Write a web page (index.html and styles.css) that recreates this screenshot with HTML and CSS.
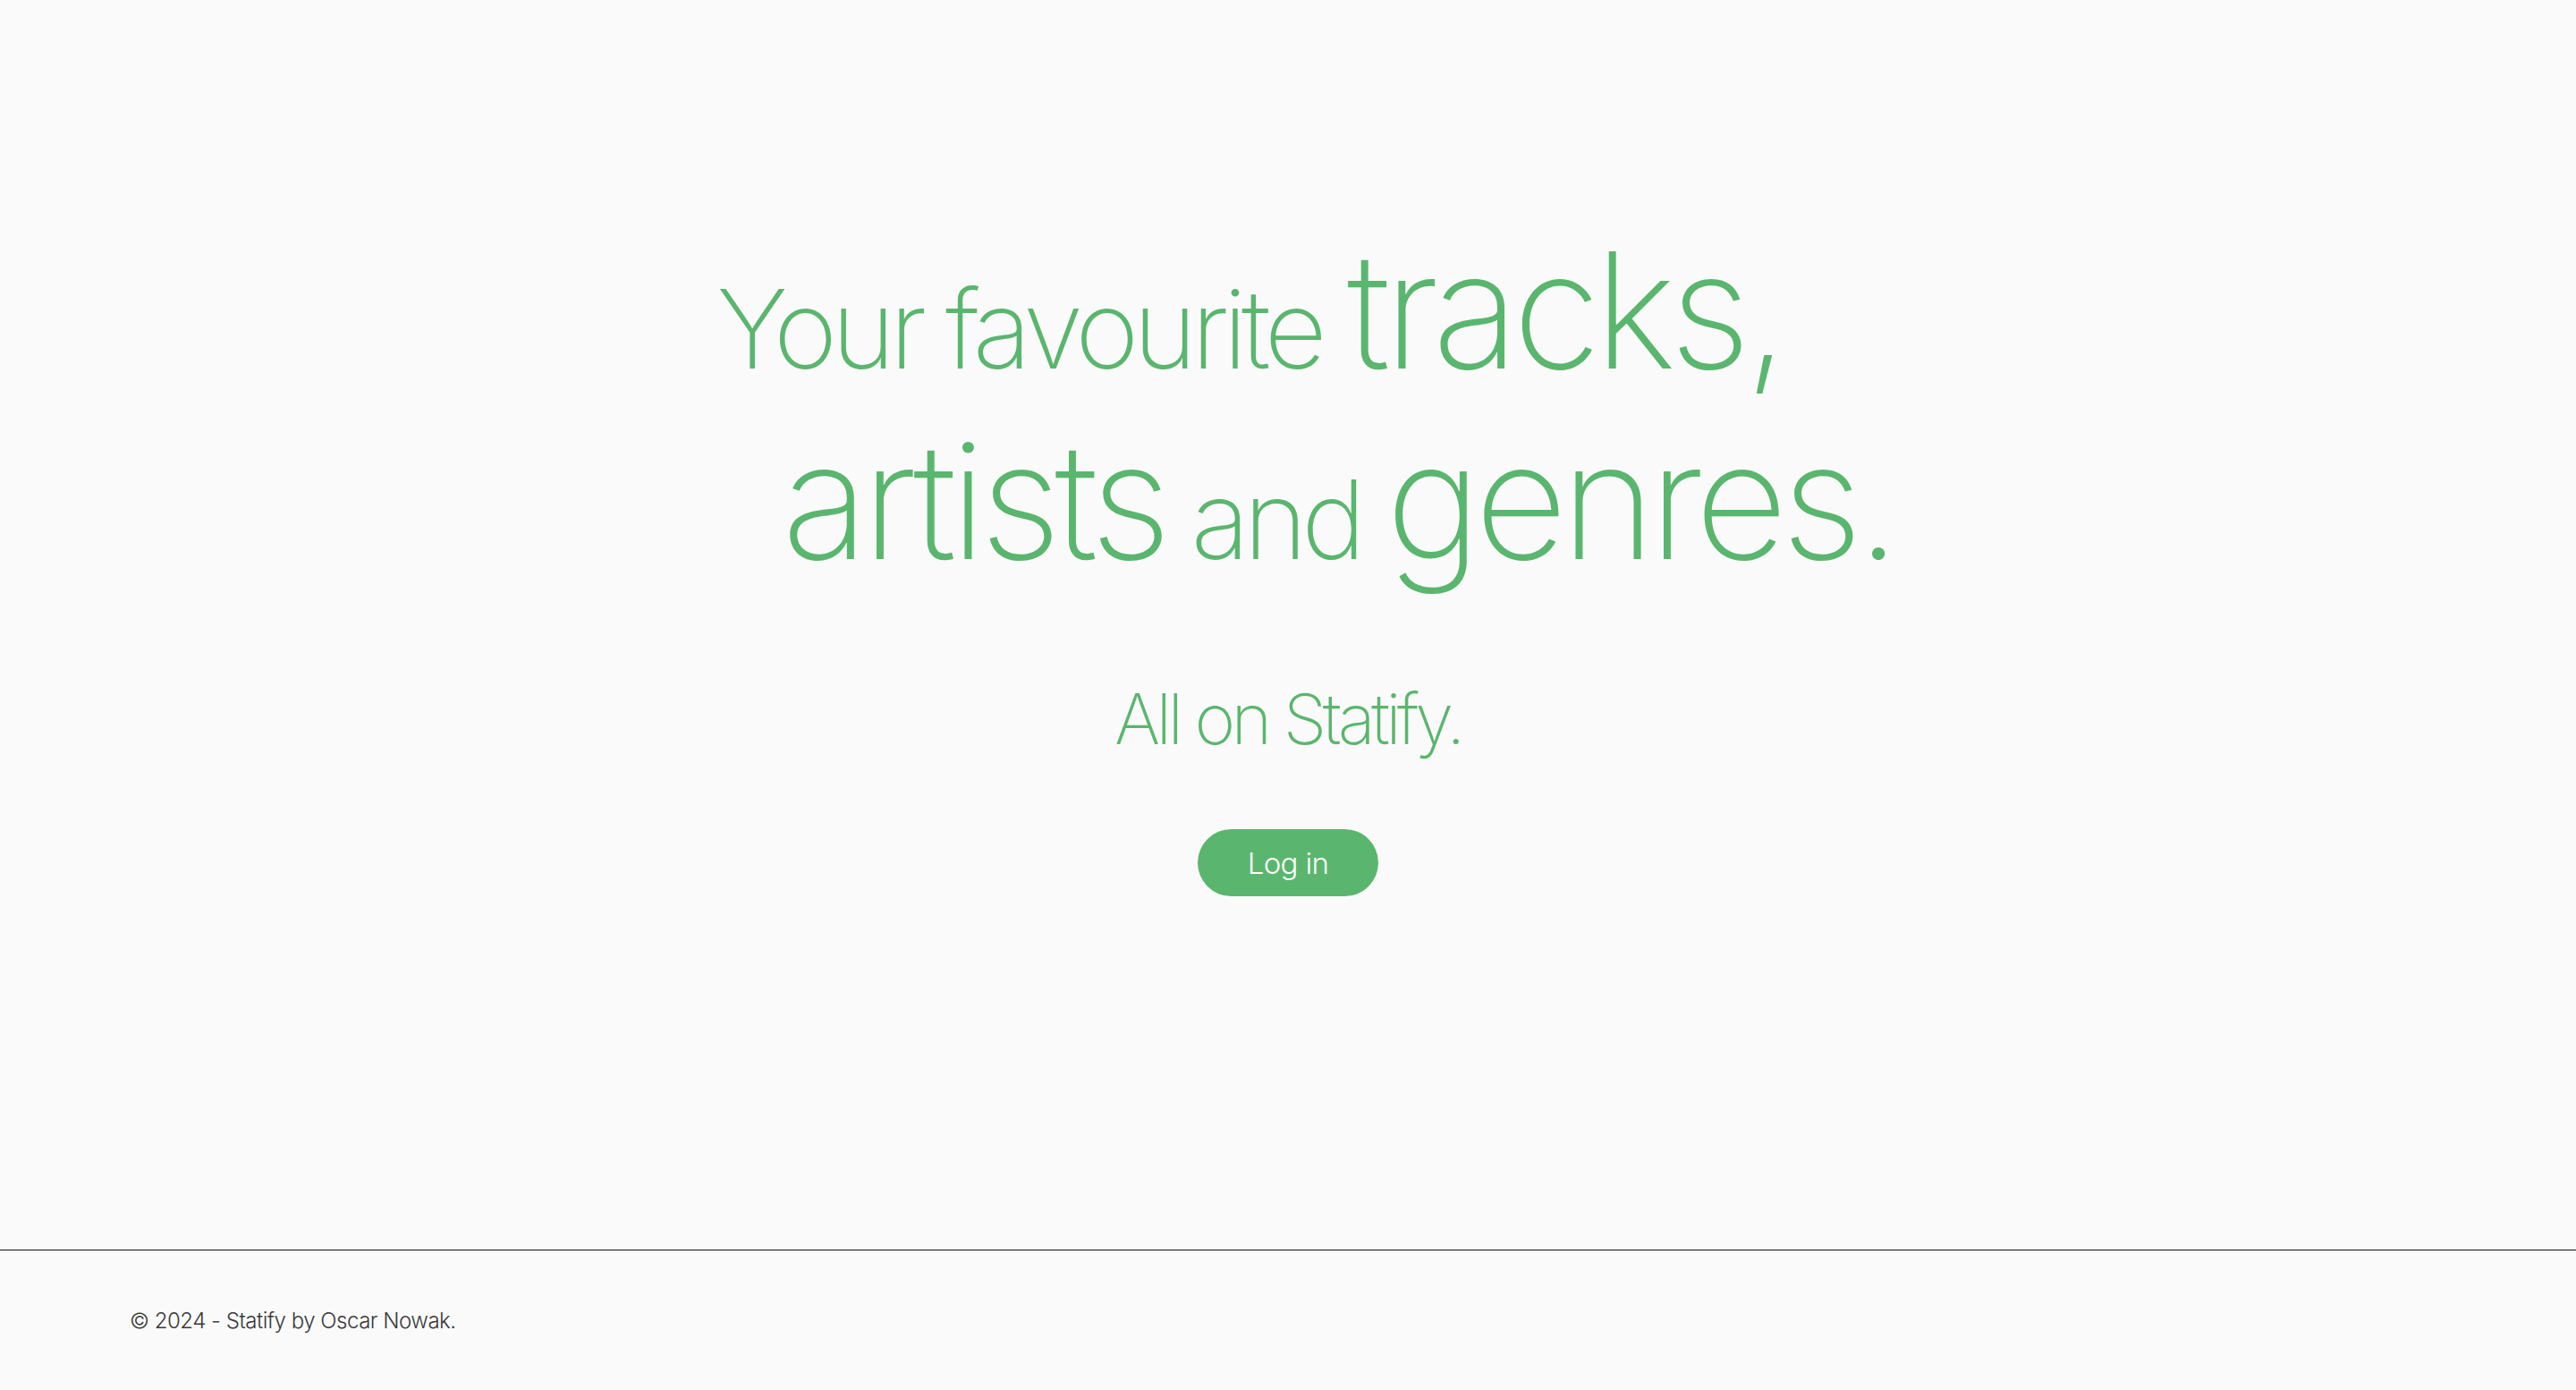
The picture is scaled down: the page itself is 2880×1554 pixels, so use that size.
FILE: index.html
```html
<!DOCTYPE html>
<html lang="en">
<head>
<meta charset="utf-8">
<title>Statify</title>
<link rel="stylesheet" href="styles.css">
</head>
<body>
<main class="hero">
  <h1 class="headline">
    <span class="line line-one"><span class="small">Your favourite</span> <span class="big">tracks,</span></span>
    <span class="line line-two"><span class="big">artists</span> <span class="small">and</span> <span class="big">genres.</span></span>
  </h1>
  <p class="tagline">All on Statify.</p>
  <a class="login" href="#">Log in</a>
</main>
<footer class="footer">
  <p class="copy">© 2024 - Statify by Oscar Nowak.</p>
</footer>
</body>
</html>
```
FILE: styles.css
```css
html, body {
  margin: 0;
  padding: 0;
}
body {
  background: #fafafa;
  font-family: "Inter", "Noto Sans", sans-serif;
  color: #5ab66e;
  height: 1554px;
  display: flex;
  flex-direction: column;
}
.hero {
  height: 1397px;
  box-sizing: border-box;
  padding-top: 240px;
  display: flex;
  flex-direction: column;
  align-items: center;
}
.headline {
  margin: 0;
  width: 100%;
  font-weight: 150;
  font-size: 180px;
  line-height: 213px;
  letter-spacing: -0.04em;
  word-spacing: -0.08em;
  text-align: center;
}
.line {
  display: block;
  white-space: nowrap;
}
.line-one {
  padding-right: 86px;
}
.line-two {
  padding-left: 112px;
}
.small {
  font-size: 122px;
  line-height: 1;
  letter-spacing: -0.055em;
  word-spacing: normal;
}
.big {
  line-height: 1;
}
.tagline {
  margin: 90px 0 0;
  font-size: 78px;
  line-height: 96px;
  font-weight: 150;
  letter-spacing: -0.06em;
}
.login {
  margin-top: 75px;
  height: 75px;
  padding: 0 56px;
  border-radius: 38px;
  background: #5ab66e;
  color: #ffffff;
  text-decoration: none;
  font-size: 33px;
  font-weight: 300;
  letter-spacing: -0.02em;
  display: flex;
  align-items: center;
  justify-content: center;
}
.footer {
  border-top: 1px solid #111111;
  flex: 1;
  padding-left: 145px;
}
.copy {
  margin: 0;
  padding-top: 64px;
  font-size: 24px;
  line-height: 30px;
  font-weight: 300;
  letter-spacing: -0.02em;
  color: #3a3a3a;
}
```
